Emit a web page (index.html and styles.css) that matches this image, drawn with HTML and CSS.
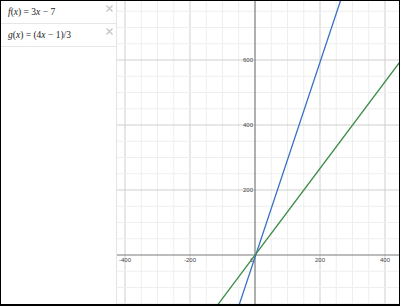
FILE: index.html
```html
<!DOCTYPE html>
<html lang="en">
<head>
  <meta charset="UTF-8" />
  <title>Graphing Calculator</title>
  <link rel="stylesheet" href="styles.css">
</head>
<body>

  <div class="app">
    <div class="expressions">
      <div class="expr">
        <span class="math"><i>f</i>(<i>x</i>) = 3<i>x</i> − 7</span>
        <svg class="close" width="7" height="7" viewBox="0 0 7 7"><path d="M0.5 0.5L6.5 6.5M6.5 0.5L0.5 6.5" /></svg>
      </div>
      <div class="expr">
        <span class="math"><i>g</i>(<i>x</i>) = (4<i>x</i> − 1)/3</span>
        <svg class="close" width="7" height="7" viewBox="0 0 7 7"><path d="M0.5 0.5L6.5 6.5M6.5 0.5L0.5 6.5" /></svg>
      </div>
    </div>

    <div class="graph">
      <svg id="plot" width="282" height="303" viewBox="117 1 282 303"></svg>
    </div>
  </div>

  <script>
    const svg = document.getElementById("plot");
    const NS = "http://www.w3.org/2000/svg";
    const ox = 255, oy = 255, step = 16.25; // 50 units per step
    const minX = 117, maxX = 399, minY = 1, maxY = 304;

    function add(tag, attrs, text) {
      const el = document.createElementNS(NS, tag);
      for (const k in attrs) el.setAttribute(k, attrs[k]);
      if (text) el.textContent = text;
      svg.appendChild(el);
      return el;
    }

    // grid
    for (let k = -8; k <= 8; k++) {
      if (k === 0) continue;
      const x = ox + k * step;
      add("line", { x1: x, y1: minY, x2: x, y2: maxY, class: k % 4 ? "minor" : "major" });
    }
    for (let k = -3; k <= 15; k++) {
      if (k === 0) continue;
      const y = oy - k * step;
      add("line", { x1: minX, y1: y, x2: maxX, y2: y, class: k % 4 ? "minor" : "major" });
    }

    // axes
    add("line", { x1: minX, y1: oy, x2: maxX, y2: oy, class: "axis" });
    add("line", { x1: ox, y1: minY, x2: ox, y2: maxY, class: "axis" });

    // labels
    [-400, -200, 200, 400].forEach(v => {
      add("text", { x: ox + v / 50 * step, y: oy + 6.5, class: "tick", "text-anchor": "middle" }, String(v));
    });
    [200, 400, 600].forEach(v => {
      add("text", { x: ox - 2, y: oy - v / 50 * step + 2, class: "tick", "text-anchor": "end" }, String(v));
    });
    add("text", { x: ox - 1.5, y: oy + 6.5, class: "tick", "text-anchor": "end" }, "0");

    // functions
    const sx = v => ox + v / 50 * step;
    const sy = v => oy - v / 50 * step;
    function plot(fn, cls) {
      const x0 = -600, x1 = 600;
      add("line", { x1: sx(x0), y1: sy(fn(x0)), x2: sx(x1), y2: sy(fn(x1)), class: cls });
    }
    plot(x => 3 * x - 7, "fn blue");
    plot(x => (4 * x - 1) / 3, "fn green");
  </script>
</body>
</html>
```

FILE: styles.css
```css
body {
  margin: 0;
  background: #fff;
}

.app {
  display: flex;
  width: 400px;
  height: 306px;
  box-sizing: border-box;
  border: 1px solid #000;
  border-bottom-width: 2px;
  overflow: hidden;
}

.expressions {
  width: 116px;
  flex-shrink: 0;
  box-sizing: border-box;
  border-right: 1px solid #e4e4e4;
  background: #fff;
}

.expr {
  display: flex;
  justify-content: space-between;
  align-items: flex-start;
  height: 22px;
  padding: 0 3px 0 7px;
  border-bottom: 1px solid #e6e6e6;
}

.math {
  font-family: "Liberation Serif", serif;
  font-size: 9.5px;
  color: #222;
  line-height: 23px;
  white-space: nowrap;
}

.close {
  margin-top: 4px;
  stroke: #c4c4c4;
  stroke-width: 1.3;
}

.graph {
  flex: 1;
  overflow: hidden;
}

#plot {
  display: block;
}

.minor {
  stroke: #eeeeee;
  stroke-width: 1;
}

.major {
  stroke: #cfcfcf;
  stroke-width: 1;
}

.axis {
  stroke: #7a7a7a;
  stroke-width: 1.2;
}

.tick {
  font-family: "Liberation Sans", Arial, sans-serif;
  font-size: 6px;
  fill: #444;
}

.fn {
  stroke-width: 1.3;
}

.blue {
  stroke: #3a70c4;
}

.green {
  stroke: #3a8c46;
}
```
